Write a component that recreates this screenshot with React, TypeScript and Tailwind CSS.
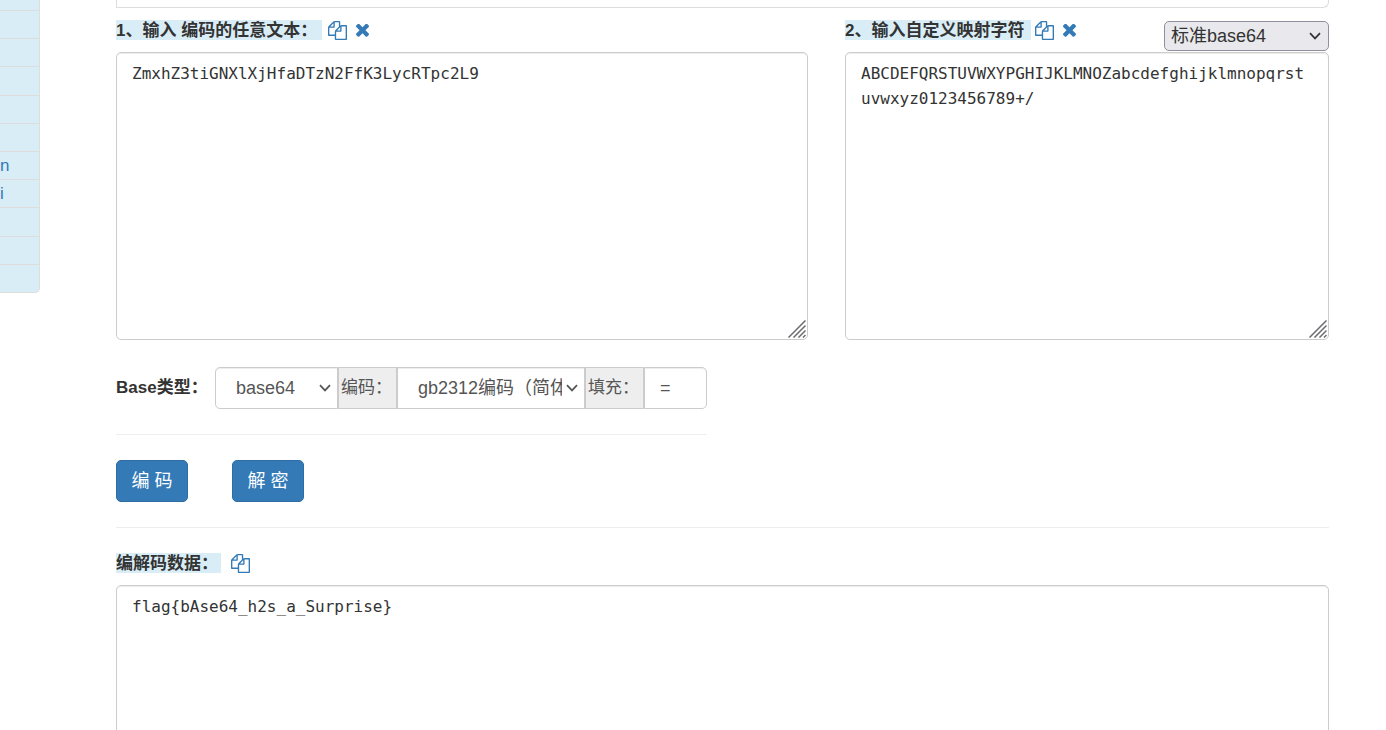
import type { ReactNode, SelectHTMLAttributes, TextareaHTMLAttributes } from 'react';

const menuItems = ['', '', '', '', '', 'n', 'i', '', '', ''];

function CopyIcon() {
  return (
    <svg viewBox="0 0 1792 1792" className="size-[19px] fill-current" aria-hidden="true">
      <path d="M1696 384q40 0 68 28t28 68v1216q0 40-28 68t-68 28h-960q-40 0-68-28t-28-68v-288h-544q-40 0-68-28t-28-68v-672q0-40 20-88t48-76l408-408q28-28 76-48t88-20h416q40 0 68 28t28 68v328q68-40 128-40h416zm-544 213l-299 299h299v-299zm-640-384l-299 299h299v-299zm196 647l316-316v-416h-384v416q0 40-28 68t-68 28h-416v640h512v-256q0-40 20-88t48-76zm956 804v-1152h-384v416q0 40-28 68t-68 28h-416v640h896z" />
    </svg>
  );
}

function TimesIcon() {
  return (
    <svg viewBox="302 390 1188 1188" className="size-[13px] fill-current" aria-hidden="true">
      <path d="M1490 1322q0 40-28 68l-136 136q-28 28-68 28t-68-28l-294-294-294 294q-28 28-68 28t-68-28l-136-136q-28-28-28-68t28-68l294-294-294-294q-28-28-28-68t28-68l136-136q28-28 68-28t68 28l294 294 294-294q28-28 68-28t68 28l136 136q28 28 28 68t-28 68l-294 294 294 294q28 28 28 68z" />
    </svg>
  );
}

function IconButton({ label, children }: { label: string; children: ReactNode }) {
  return (
    <button type="button" aria-label={label} className="flex cursor-pointer items-center text-[#337ab7]">
      {children}
    </button>
  );
}

function Area({ grip, className, ...props }: TextareaHTMLAttributes<HTMLTextAreaElement> & { grip?: boolean }) {
  return (
    <div className="relative">
      <textarea
        spellCheck={false}
        className={`block w-full resize-none overflow-hidden rounded-[5px] border border-[#ccc] bg-white px-[15px] py-2 font-['DejaVu_Sans_Mono','Noto_Sans_CJK_SC',monospace] text-[16px] leading-[25px] text-[#333] shadow-[inset_0_1px_1px_rgba(0,0,0,0.075)] outline-none ${className}`}
        {...props}
      />
      {grip && (
        <svg
          viewBox="0 0 18 18"
          className="pointer-events-none absolute right-0.5 bottom-0.5 size-[18px]"
          fill="none"
          stroke="#6b6b70"
          strokeWidth="1.5"
          aria-hidden="true"
        >
          <path d="M0.5 17.5L17.5 0.5M5.5 17.5L17.5 5.5M10.5 17.5L17.5 10.5M15 17.5L17.5 15" />
        </svg>
      )}
    </div>
  );
}

function Select({
  wrap,
  arrow,
  className,
  children,
  ...props
}: SelectHTMLAttributes<HTMLSelectElement> & { wrap: string; arrow: string }) {
  return (
    <div className={`relative ${wrap}`}>
      <select className={`size-full appearance-none border text-lg outline-none ${className}`} {...props}>
        {children}
      </select>
      <svg
        viewBox="0 0 12 8"
        className={`pointer-events-none absolute top-1/2 h-2 w-3 -translate-y-1/2 ${arrow}`}
        fill="none"
        stroke="currentColor"
        strokeWidth="1.7"
        aria-hidden="true"
      >
        <path d="M1 1.2L6 6.4L11 1.2" />
      </svg>
    </div>
  );
}

const primary =
  'h-[42px] w-[72px] cursor-pointer rounded-[5px] border border-[#2e6da4] bg-[#337ab7] text-lg text-white';
const marked = 'h-5 bg-[#d9edf7] text-[17px] leading-[22px] font-bold whitespace-nowrap';
const addon =
  'flex w-[59px] shrink-0 items-center border-x border-y border-[#ccc] bg-[#eee] pl-0.5 text-[17px] text-[#555] whitespace-nowrap';

export default function App() {
  return (
    <div className="flex h-screen items-start overflow-hidden bg-white font-['Liberation_Sans','Noto_Sans_CJK_SC',sans-serif] text-[#333]">
      <nav className="w-10 shrink-0 overflow-hidden rounded-br-[5px] border-r border-b border-[#ddd] bg-[#d9edf7]">
        <div className="h-[10px]" />
        <ul className="flex h-[282px] flex-col">
          {menuItems.map((item, i) => (
            <li key={i} className="flex flex-1 items-center border-t border-[#ddd] text-[17px] leading-5 text-[#337ab7]">
              {item && <a href="#">{item}</a>}
            </li>
          ))}
        </ul>
      </nav>

      <main className="min-w-0 flex-1 pr-[57px] pl-[76px]">
        <div className="h-2 rounded-br-[6px] border-r border-b border-l border-[#ddd]" />

        <div className="grid grid-cols-[692fr_484fr] gap-x-[37px]">
          <section>
            <div className="flex h-11 items-center">
              <label htmlFor="source" className={`${marked} min-w-[206px]`}>
                1、输入 编码的任意文本：
              </label>
              <div className="ml-1.5 flex items-center gap-[9px]">
                <IconButton label="复制">
                  <CopyIcon />
                </IconButton>
                <IconButton label="清空">
                  <TimesIcon />
                </IconButton>
              </div>
            </div>
            <Area id="source" grip className="h-72" defaultValue="ZmxhZ3tiGNXlXjHfaDTzN2FfK3LycRTpc2L9" />
          </section>

          <section>
            <div className="flex h-11 items-center">
              <label htmlFor="alphabet" className={`${marked} min-w-[186px]`}>
                2、输入自定义映射字符
              </label>
              <div className="ml-1 flex items-center gap-[9px]">
                <IconButton label="复制">
                  <CopyIcon />
                </IconButton>
                <IconButton label="清空">
                  <TimesIcon />
                </IconButton>
              </div>
              <Select
                aria-label="映射表"
                wrap="mt-auto mb-px ml-auto h-[30px] w-[165px]"
                arrow="right-2"
                className="rounded-[5px] border-[#8f8f9d] bg-[#e9e9ed] pl-1.5"
              >
                <option>标准base64</option>
              </Select>
            </div>
            <Area
              id="alphabet"
              grip
              className="h-72 break-all"
              defaultValue="ABCDEFQRSTUVWXYPGHIJKLMNOZabcdefghijklmnopqrstuvwxyz0123456789+/"
            />
          </section>
        </div>

        <div className="mt-[27px] w-[591px] border-b border-[#eee] pb-[25px]">
          <div className="flex h-[42px]">
            <label htmlFor="base" className="flex w-[99px] shrink-0 items-center text-[17px] font-bold whitespace-nowrap">
              Base类型：
            </label>
            <Select
              id="base"
              wrap="w-[123px] shrink-0 text-[#555]"
              arrow="right-[7px]"
              className="rounded-l-[5px] border-[#ccc] bg-white pr-6 pl-5 shadow-[inset_0_1px_1px_rgba(0,0,0,0.075)]"
            >
              <option>base64</option>
            </Select>
            <label htmlFor="charset" className={addon}>
              编码：
            </label>
            <Select
              id="charset"
              wrap="w-[188px] shrink-0 text-[#555]"
              arrow="right-[7px]"
              className="border-[#ccc] bg-white pr-[22px] pl-5 shadow-[inset_0_1px_1px_rgba(0,0,0,0.075)]"
            >
              <option>gb2312编码（简体）</option>
            </Select>
            <label htmlFor="padding" className={addon}>
              填充：
            </label>
            <input
              id="padding"
              defaultValue="="
              className="min-w-0 flex-1 rounded-r-[5px] border border-[#ccc] px-[15px] text-lg text-[#555] shadow-[inset_0_1px_1px_rgba(0,0,0,0.075)] outline-none"
            />
          </div>
        </div>

        <div className="flex gap-11 border-b border-[#eee] py-[25px]">
          <button type="button" className={primary}>
            编 码
          </button>
          <button type="button" className={primary}>
            解 密
          </button>
        </div>

        <div className="mt-[13px] flex h-11 items-center">
          <label htmlFor="result" className={`${marked} min-w-[105px]`}>
            编解码数据：
          </label>
          <div className="ml-2.5">
            <IconButton label="复制">
              <CopyIcon />
            </IconButton>
          </div>
        </div>
        <Area id="result" className="h-72" defaultValue="flag{bAse64_h2s_a_Surprise}" />
      </main>
    </div>
  );
}
